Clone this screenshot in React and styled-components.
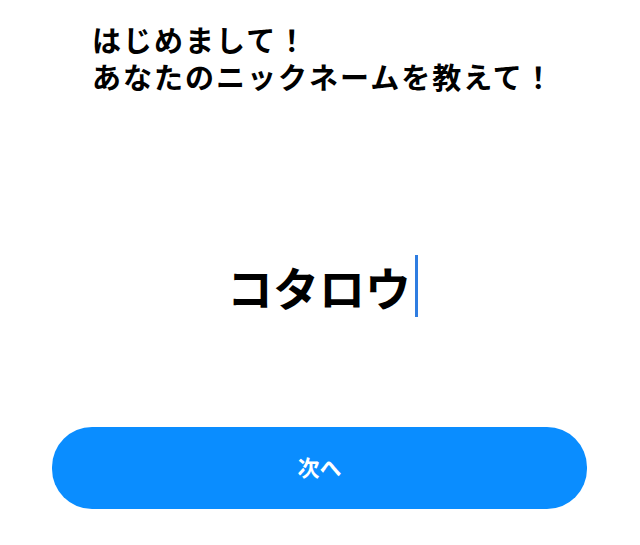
import React from 'react';
import styled, { createGlobalStyle } from 'styled-components';

const GlobalStyle = createGlobalStyle`
  html, body {
    margin: 0;
    padding: 0;
    background: #ffffff;
  }
  body {
    font-family: "Noto Sans CJK JP", "Noto Sans", sans-serif;
    color: #000000;
  }
`;

const Page = styled.div`
  width: 640px;
  height: 545px;
  display: flex;
  flex-direction: column;
  box-sizing: border-box;
  padding: 21px 53px 0 52px;
`;

const Heading = styled.h1`
  margin: 0;
  padding-left: 40px;
  font-size: 29px;
  font-weight: 700;
  letter-spacing: 2px;
`;

const HeadingLine = styled.span`
  display: block;
  height: 37px;
  line-height: 37px;
`;

const NameArea = styled.div`
  flex: 1;
  display: flex;
  align-items: center;
  justify-content: center;
  padding-top: 50px;
`;

const NameText = styled.span`
  font-size: 46px;
  font-weight: 700;
  line-height: 62px;
  display: inline-flex;
  align-items: center;
  padding-left: 6px;
`;

const Caret = styled.span`
  display: inline-block;
  width: 3px;
  height: 62px;
  margin-left: 4px;
  background: #2f7de1;
`;

const NextButton = styled.button`
  width: 535px;
  height: 82px;
  margin-bottom: 36px;
  border: none;
  border-radius: 40px;
  background: #0a8dff;
  color: #ffffff;
  font-family: "Noto Sans CJK JP", "Noto Sans", sans-serif;
  font-size: 22px;
  font-weight: 700;
  padding: 0 0 4px;
  cursor: pointer;
`;

export default function App() {
  return (
    <>
      <GlobalStyle />
      <Page>
        <Heading>
          <HeadingLine>はじめまして！</HeadingLine>
          <HeadingLine>あなたのニックネームを教えて！</HeadingLine>
        </Heading>
        <NameArea>
          <NameText>
            コタロウ
            <Caret />
          </NameText>
        </NameArea>
        <NextButton type="button">次へ</NextButton>
      </Page>
    </>
  );
}
